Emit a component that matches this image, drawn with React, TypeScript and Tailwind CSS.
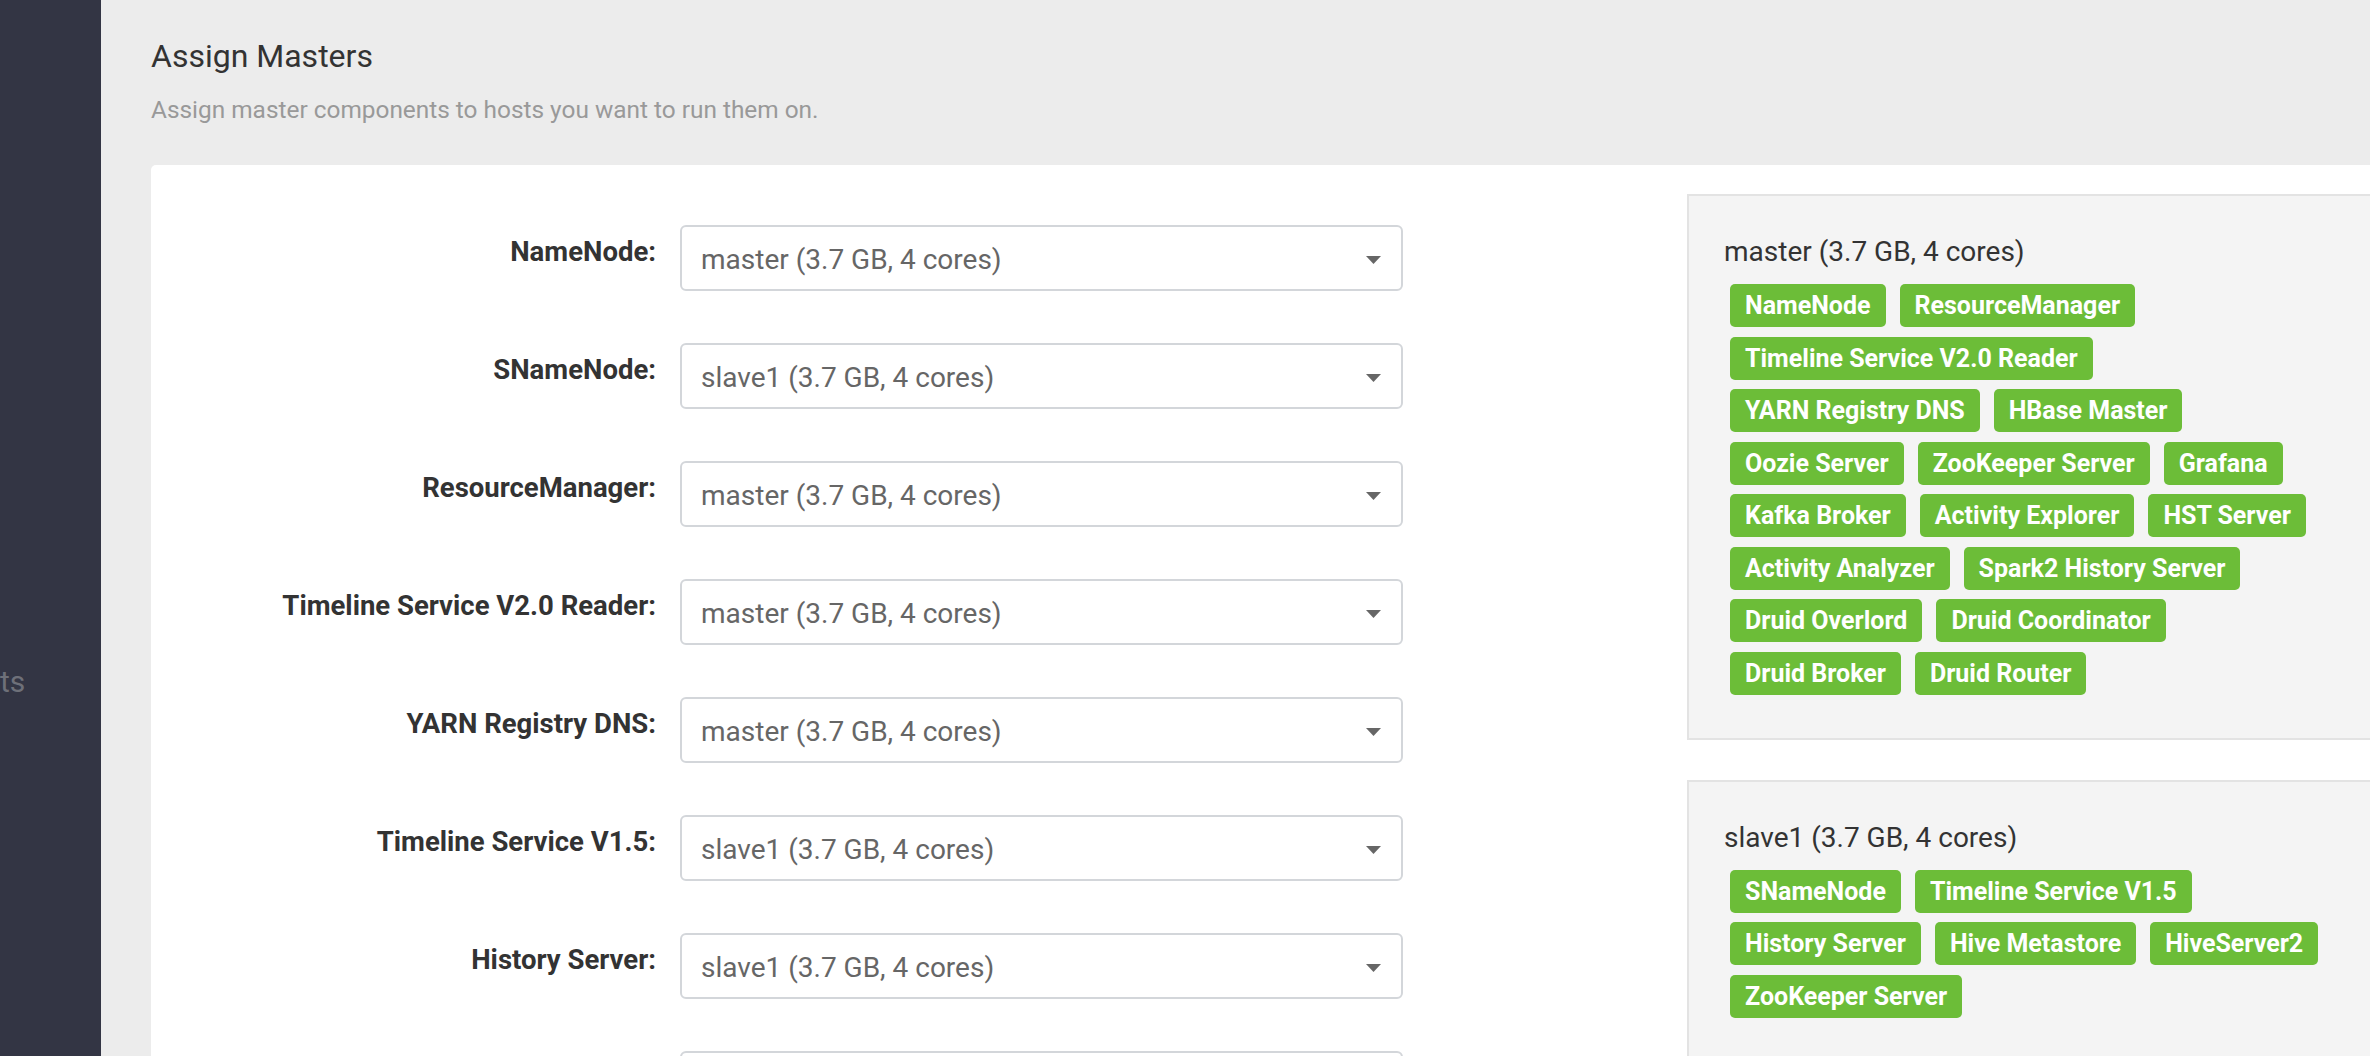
import {useState} from 'react';

const assignments = [
  { label: 'NameNode', host: 'master' },
  { label: 'SNameNode', host: 'slave1' },
  { label: 'ResourceManager', host: 'master' },
  { label: 'Timeline Service V2.0 Reader', host: 'master' },
  { label: 'YARN Registry DNS', host: 'master' },
  { label: 'Timeline Service V1.5', host: 'slave1' },
  { label: 'History Server', host: 'slave1' },
  { label: 'Hive Metastore', host: 'slave1' },
];

const hosts = [
  {
    name: 'master',
    components: [
      'NameNode',
      'ResourceManager',
      'Timeline Service V2.0 Reader',
      'YARN Registry DNS',
      'HBase Master',
      'Oozie Server',
      'ZooKeeper Server',
      'Grafana',
      'Kafka Broker',
      'Activity Explorer',
      'HST Server',
      'Activity Analyzer',
      'Spark2 History Server',
      'Druid Overlord',
      'Druid Coordinator',
      'Druid Broker',
      'Druid Router',
    ],
  },
  {
    name: 'slave1',
    components: [
      'SNameNode',
      'Timeline Service V1.5',
      'History Server',
      'Hive Metastore',
      'HiveServer2',
      'ZooKeeper Server',
    ],
  },
];

const hostLabel = (name: string) => `${name} (3.7 GB, 4 cores)`;

const Caret = () => (
  <svg width="15" height="8" viewBox="0 0 15 8" className="shrink-0">
    <polygon points="0,0 15,0 7.5,8" fill="#666" />
  </svg>
);

const App = () => {
  const [selected] = useState(assignments);

  return (
    <div className="flex h-[1056px] w-[2370px] overflow-hidden bg-[#ececec] font-['Roboto',sans-serif]">
      {/* wizard sidebar, mostly scrolled out of view */}
      <div className="w-[101px] shrink-0 overflow-hidden bg-[#333544] pt-[664px]">
        <div className="whitespace-nowrap text-[30px] leading-[36px] text-[#6e7079]">ts</div>
      </div>

      <div className="min-w-0 flex-1 pl-[50px] pt-[37px]">
        <h1 className="text-[32px] font-normal leading-[39px] text-[#333]">Assign Masters</h1>
        <p className="mt-[18px] text-[24.4px] leading-[32px] text-[#999]">
          Assign master components to hosts you want to run them on.
        </p>

        <div className="mt-[39px] flex w-[2400px] items-start rounded-[5px] bg-white">
          <div className="flex flex-col gap-[52px] pt-[60px]">
            {selected.map((row) => (
              <div key={row.label} className="flex items-start">
                <div className="w-[529px] pr-[24px] pt-[10px] text-right text-[27.5px] font-bold leading-[34px] text-[#333]">
                  {row.label}:
                </div>
                <div className="flex h-[66px] w-[723px] items-center justify-between rounded-[6px] border-2 border-[#d3d6da] pl-[19px] pr-[20px] pt-[4px] text-[28px] leading-[34px] text-[#666]">
                  <span>{hostLabel(row.host)}</span>
                  <Caret />
                </div>
              </div>
            ))}
          </div>

          <div className="ml-[284px] flex flex-col gap-[40px] pt-[29px]">
            {hosts.map((host) => (
              <div
                key={host.name}
                className="w-[760px] border-2 border-[#e3e3e3] bg-[#f4f4f4] pb-[43px] pl-[35px] pt-[39px]"
              >
                <div className="text-[28px] leading-[34px] text-[#333]">{hostLabel(host.name)}</div>
                <div className="ml-[6px] mt-[15px] flex w-[600px] flex-wrap gap-x-[14px] gap-y-[9.5px]">
                  {host.components.map((c) => (
                    <span
                      key={c}
                      className="flex h-[43px] items-center rounded-[5px] bg-[#6cbd38] px-[15px] text-[25px] font-bold leading-[43px] text-white"
                    >
                      {c}
                    </span>
                  ))}
                </div>
              </div>
            ))}
          </div>
        </div>
      </div>
    </div>
  );
};

export default App;
